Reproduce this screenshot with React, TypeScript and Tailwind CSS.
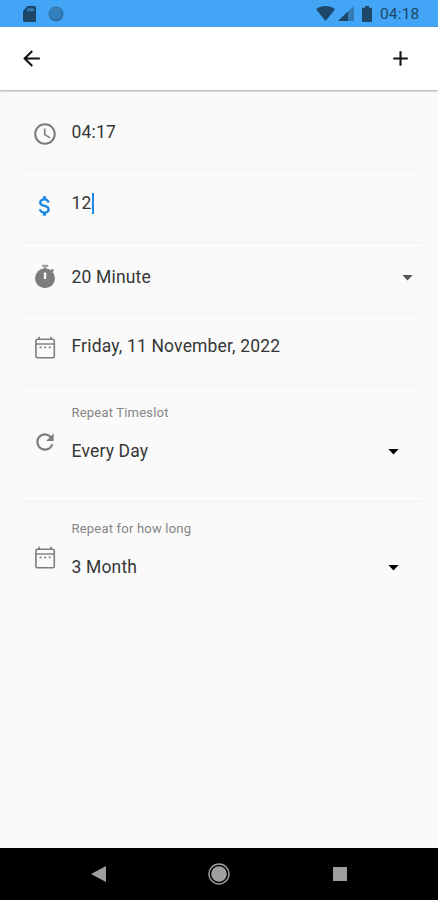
import type { ReactNode } from "react";
import { MdAccessTime, MdAdd, MdArrowBack, MdAttachMoney, MdRefresh } from "react-icons/md";

const CalendarIcon = () => (
  <svg width="22" height="24" viewBox="0 0 22 24" fill="none" stroke="#7c7c7c">
    <rect x="1.9" y="3.2" width="18.4" height="18.6" rx="1.6" strokeWidth="1.6" />
    <path d="M5.2 .8v3M17 .8v3" strokeWidth="1.6" />
    <path d="M1.9 8h18.4" strokeWidth="1.4" />
    <path d="M5.6 11.3h1.800M10.200 11.300h1.800M14.800 11.300h1.800" strokeWidth="1.7" />
  </svg>
);

const TimerIcon = () => (
  <svg width="22" height="25" viewBox="0 0 22 25">
    <path d="M8 .8h6.2v2H8z" fill="#9a9a9a" />
    <path d="M10 2.8h2.2v2H10z" fill="#999" />
    <path d="M17.3 7.6l1.8-1.9" stroke="#7c7c7c" strokeWidth="2.6" />
    <circle cx="11" cy="14.2" r="10" fill="#7c7c7c" />
    <rect x="9.9" y="8.6" width="2.3" height="6.4" rx=".6" fill="#fafafa" />
  </svg>
);

const Caret = ({ className }: { className: string }) => (
  <svg width="11" height="6" viewBox="0 0 11 6" className={className}>
    <path d="M.4 0h10.200L5.5 5.6z" fill="currentColor" />
  </svg>
);

const Row = ({ icon, className, children }: { icon: ReactNode; className: string; children: ReactNode }) => (
  <div className={`flex border-b border-[#f0f0f0] pl-3 ${className}`}>
    <div className="flex w-[26px] shrink-0 justify-center">{icon}</div>
    <div className="ml-[13.5px] grow">{children}</div>
  </div>
);

const StatusBar = () => (
  <div className="flex h-[27px] shrink-0 items-center bg-[#42a5f5] pl-[23px] pr-[17px] text-[#1c4769]">
    <svg width="13" height="16" viewBox="0 0 13 16">
      <path d="M4.5 0H11.5Q13 0 13 1.5V14.5Q13 16 11.5 16H1.5Q0 16 0 14.5V5z" fill="currentColor" />
      <path d="M5.2 2.2h5.8v3H3z" fill="#3579ad" />
    </svg>
    <svg width="16" height="16" viewBox="0 0 16 16" className="ml-[12px]">
      <circle cx="8" cy="8" r="7.5" fill="#2f6fa5" />
      <circle cx="7.7" cy="7.4" r="6" fill="#3580bf" />
    </svg>
    <svg width="19" height="15" viewBox="0 0 19 15" className="ml-auto">
      <path d="M0 3.3C5.5-1 13.5-1 19 3.3L9.5 15z" fill="currentColor" />
    </svg>
    <svg width="16" height="15" viewBox="0 0 16 15" className="ml-[3px]">
      <path d="M16 0v15H0z" fill="#327bb5" />
      <path d="M10 5.6V15H0z" fill="currentColor" />
    </svg>
    <svg width="10" height="16" viewBox="0 0 10 16" className="ml-[8px]">
      <path d="M3 0h4v1.7h2q1 0 1 1V15q0 1-1 1H1q-1 0-1-1V2.700q0-1 1-1h2z" fill="currentColor" />
    </svg>
    <span className="ml-[8px] w-[41px] whitespace-nowrap pt-[3px] text-[15.5px] leading-none tracking-[0.15px]">
      04:18
    </span>
  </div>
);

const NavBar = () => (
  <div className="flex h-[52px] shrink-0 items-center bg-black pl-[91px] pr-[91px] text-[#9e9e9e]">
    <svg width="15" height="16" viewBox="0 0 15 16">
      <path d="M15 0v16L0 8z" fill="currentColor" />
    </svg>
    <svg width="22" height="22" viewBox="0 0 22 22" className="ml-[102px]">
      <circle cx="11" cy="11" r="10" fill="none" stroke="currentColor" strokeWidth="1.4" />
      <circle cx="11" cy="11" r="7.8" fill="currentColor" />
    </svg>
    <div className="ml-auto size-[14px] bg-[#9e9e9e]" />
  </div>
);

const App = () => {
  return (
    <div className="flex h-[900px] w-[438px] flex-col overflow-hidden bg-[#fafafa] font-[Roboto,sans-serif] text-[17.5px] leading-5 tracking-[0.17px] text-[#363636]">
      <StatusBar />
      <header className="flex h-[63px] shrink-0 items-center justify-between bg-white pl-[19px] pr-[25px] text-[#151515] shadow-[0_1px_2px_rgba(0,0,0,0.35)]">
        <MdArrowBack size={25} />
        <MdAdd size={25} />
      </header>

      <main className="flex grow flex-col pl-5 pr-[17px]">
        <Row className="h-[80px] pt-[31px]" icon={<MdAccessTime size={26} color="#7c7c7c" />}>
          <p className="pt-px">04:17</p>
        </Row>
        <Row className="h-[73px] pt-[23px]" icon={<MdAttachMoney size={26} color="#1e88e5" />}>
          <div className="flex">
            <span>12</span>
            <span className="h-[21px] w-[2px] bg-[#1e88e5]" />
          </div>
        </Row>
        <Row className="h-[71px] pt-[21px]" icon={<TimerIcon />}>
          <div className="flex items-center justify-between pr-[8px] pt-[3px]">
            <span>20 Minute</span>
            <Caret className="mt-px text-[#555]" />
          </div>
        </Row>
        <Row className="h-[72px] pt-[22px]" icon={<CalendarIcon />}>
          <p>Friday, 11 November, 2022</p>
        </Row>
        <Row
          className="h-[116px] pt-[18px]"
          icon={<MdRefresh size={26} color="#7c7c7c" className="mt-[25px]" />}
        >
          <p className="text-[13px] leading-[18px] tracking-[0.2px] text-[#858585]">Repeat Timeslot</p>
          <div className="mt-[19px] flex items-center justify-between pr-[22px]">
            <span>Every Day</span>
            <Caret className="mt-px text-black" />
          </div>
        </Row>
        <Row
          className="h-[116px] border-b-0 pt-[18px]"
          icon={<div className="mt-[26px]"><CalendarIcon /></div>}
        >
          <p className="text-[13px] leading-[18px] tracking-[0.2px] text-[#858585]">Repeat for how long</p>
          <div className="mt-[19px] flex items-center justify-between pr-[22px]">
            <span>3 Month</span>
            <Caret className="mt-px text-black" />
          </div>
        </Row>
      </main>

      <NavBar />
    </div>
  );
};

export default App;
